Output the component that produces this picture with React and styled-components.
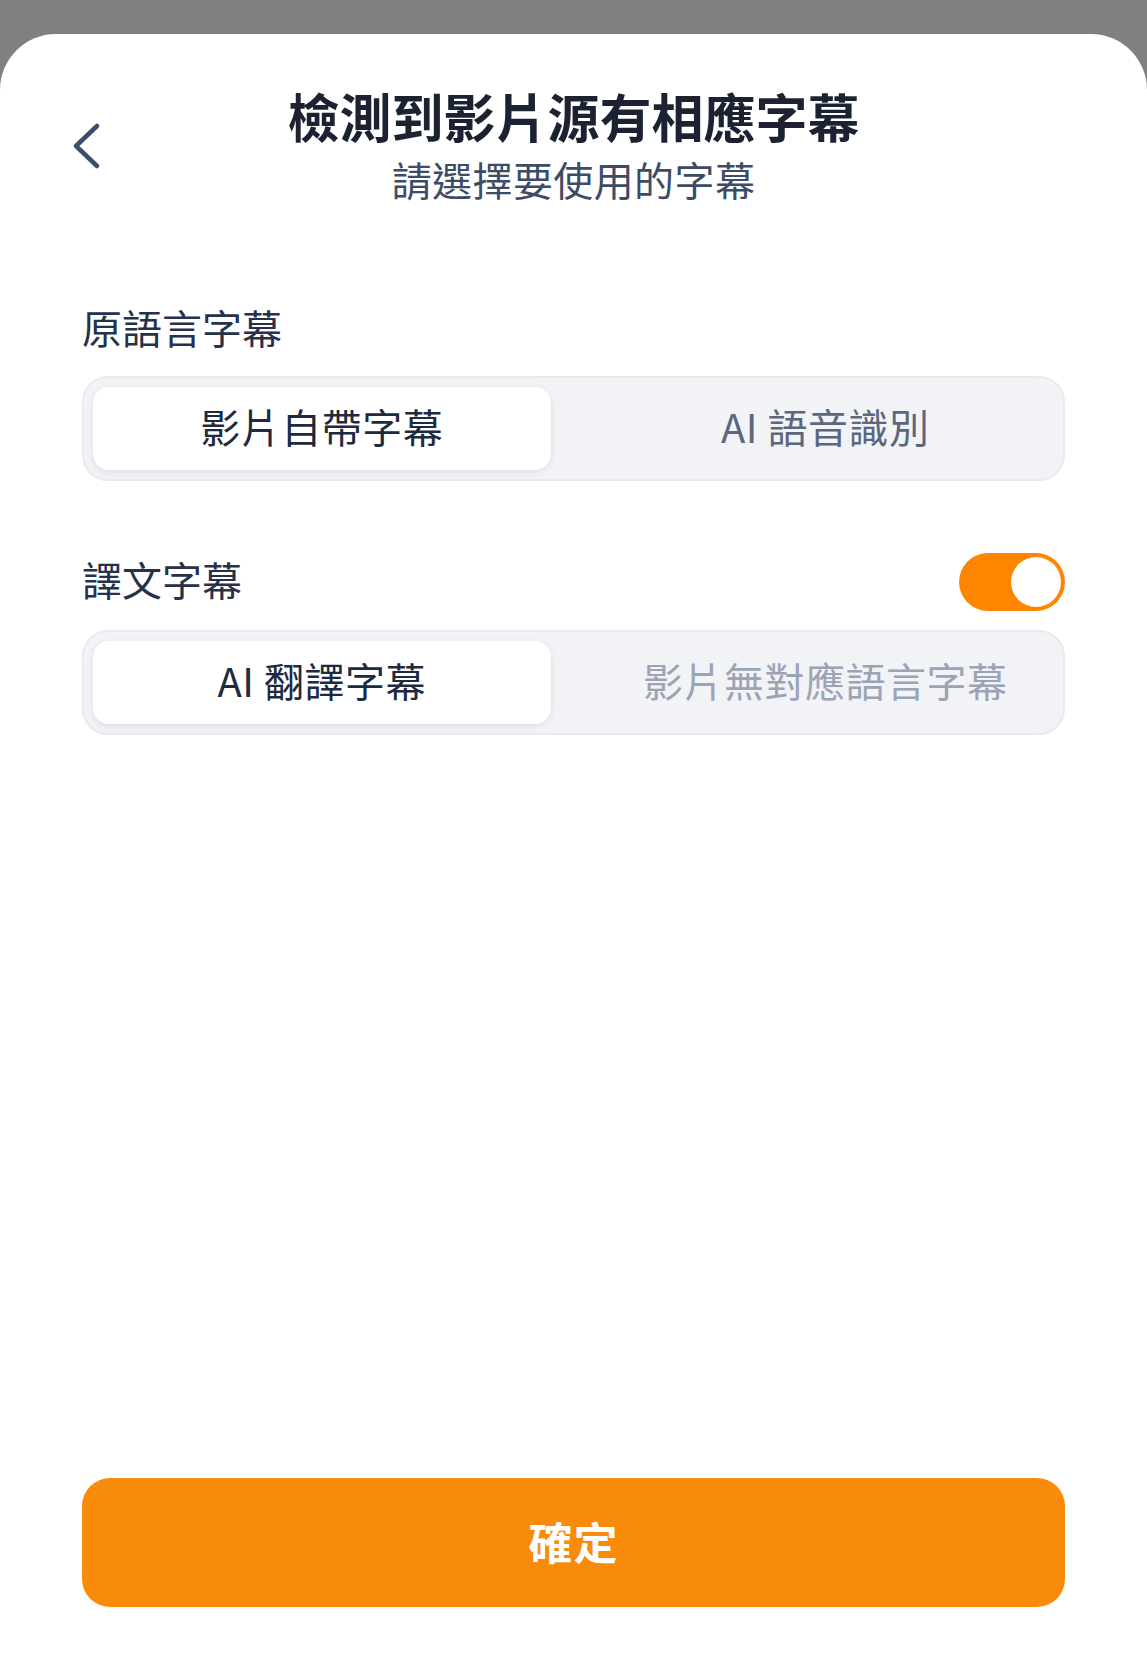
import React, { useState } from 'react'
import styled, { createGlobalStyle } from 'styled-components'

const GlobalStyle = createGlobalStyle`
  html, body {
    margin: 0;
    padding: 0;
    background: #808080;
  }
  * {
    box-sizing: border-box;
  }
`

const FONT = `"Noto Sans CJK TC", "Noto Sans", sans-serif`

const Backdrop = styled.div`
  min-height: 100vh;
  padding-top: 34px;
  display: flex;
  flex-direction: column;
  font-family: ${FONT};
`

const Sheet = styled.div`
  flex: 1;
  display: flex;
  flex-direction: column;
  background: #ffffff;
  border-radius: 56px 56px 0 0;
  padding: 50px 0 50px;
`

const Header = styled.header`
  display: grid;
  grid-template-columns: 1fr auto 1fr;
  align-items: center;
  padding: 0 72px;
`

const BackButton = styled.button`
  justify-self: start;
  display: flex;
  align-items: center;
  justify-content: center;
  width: 30px;
  height: 50px;
  padding: 0;
  margin: 0;
  border: none;
  background: none;
  cursor: pointer;
`

const TitleBlock = styled.div`
  display: flex;
  flex-direction: column;
  align-items: center;
  gap: 6px;
`

const Title = styled.h1`
  margin: 0;
  font-size: 52px;
  line-height: 64px;
  font-weight: 700;
  color: #1b2333;
`

const Subtitle = styled.p`
  margin: 0 0 3px;
  font-size: 40px;
  line-height: 50px;
  font-weight: 400;
  letter-spacing: 0.4px;
  color: #3d4c66;
`

const Body = styled.main`
  flex: 1;
  display: flex;
  flex-direction: column;
  padding: 95px 82px 0;
`

const Section = styled.section`
  display: flex;
  flex-direction: column;
  gap: ${props => props.gap}px;
  margin-bottom: 72px;
`

const LabelRow = styled.div`
  display: flex;
  align-items: center;
  justify-content: space-between;
`

const Label = styled.h2`
  margin: 0;
  padding-bottom: 6px;
  font-size: 40px;
  line-height: 50px;
  font-weight: 400;
  color: #25324a;
`

const Segmented = styled.div`
  display: grid;
  grid-template-columns: 1fr 1fr;
  gap: 46px;
  padding: 9px;
  background: #f1f3f7;
  border: 2px solid #e7eaef;
  border-radius: 26px;
`

const Segment = styled.button`
  height: 83px;
  padding: 0 0 6px;
  display: flex;
  align-items: center;
  justify-content: center;
  border: none;
  border-radius: 16px;
  font-family: ${FONT};
  font-size: 40px;
  font-weight: 400;
  letter-spacing: 0.5px;
  cursor: ${props => (props.disabled ? 'default' : 'pointer')};
  background: ${props => (props.active ? '#ffffff' : 'transparent')};
  box-shadow: ${props => (props.active ? '0 2px 6px rgba(30, 40, 60, 0.10)' : 'none')};
  color: ${props => (props.active ? '#1e2a40' : props.disabled ? '#9ba4b5' : '#5c677d')};
`

const Switch = styled.button`
  width: 106px;
  height: 58px;
  padding: 4px;
  border: none;
  border-radius: 29px;
  display: flex;
  justify-content: ${props => (props.on ? 'flex-end' : 'flex-start')};
  background: ${props => (props.on ? '#ff8500' : '#d5d9e0')};
  cursor: pointer;
`

const Knob = styled.span`
  width: 50px;
  height: 50px;
  border-radius: 50%;
  background: #ffffff;
`

const Spacer = styled.div`
  flex: 1;
`

const ConfirmButton = styled.button`
  height: 129px;
  width: 100%;
  padding: 0 0 4px;
  border: none;
  border-radius: 28px;
  background: #f98b0b;
  color: #ffffff;
  font-family: ${FONT};
  font-size: 44px;
  font-weight: 700;
  letter-spacing: 1px;
  cursor: pointer;
`

const ChevronLeft = () => (
  <svg width="30" height="48" viewBox="0 0 30 48" fill="none">
    <path
      d="M25 4 L4 24 L25 44"
      stroke="#3d4e6b"
      strokeWidth="4.5"
      strokeLinecap="round"
      strokeLinejoin="round"
    />
  </svg>
)

export default function App() {
  const [source, setSource] = useState('embedded')
  const [translate, setTranslate] = useState(true)

  return (
    <>
      <GlobalStyle />
      <Backdrop>
        <Sheet>
          <Header>
            <BackButton aria-label="返回">
              <ChevronLeft />
            </BackButton>
            <TitleBlock>
              <Title>檢測到影片源有相應字幕</Title>
              <Subtitle>請選擇要使用的字幕</Subtitle>
            </TitleBlock>
            <div />
          </Header>

          <Body>
            <Section gap={18}>
              <Label>原語言字幕</Label>
              <Segmented>
                <Segment active={source === 'embedded'} onClick={() => setSource('embedded')}>
                  影片自帶字幕
                </Segment>
                <Segment active={source === 'asr'} onClick={() => setSource('asr')}>
                  AI 語音識別
                </Segment>
              </Segmented>
            </Section>

            <Section gap={19}>
              <LabelRow>
                <Label>譯文字幕</Label>
                <Switch on={translate} onClick={() => setTranslate(!translate)}>
                  <Knob />
                </Switch>
              </LabelRow>
              <Segmented>
                <Segment active>AI 翻譯字幕</Segment>
                <Segment disabled>影片無對應語言字幕</Segment>
              </Segmented>
            </Section>

            <Spacer />
            <ConfirmButton>確定</ConfirmButton>
          </Body>
        </Sheet>
      </Backdrop>
    </>
  )
}
